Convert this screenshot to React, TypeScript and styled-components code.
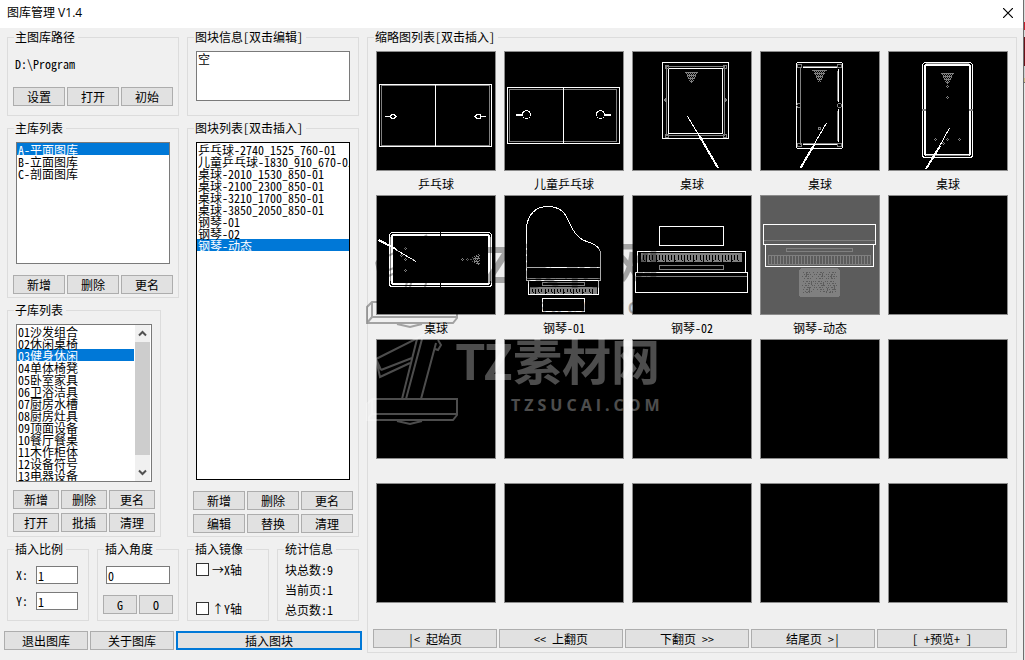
import React, { useState } from "react";
import styled, { createGlobalStyle, css } from "styled-components";

const GlobalStyle = createGlobalStyle`
  *, *::before, *::after { box-sizing: border-box; }
  body {
    margin: 0;
    background: #f0f0f0;
    color: #000;
    font: 12px/12px "Noto Sans Mono CJK SC", "Noto Sans CJK SC", monospace;
  }
  button, input, select, textarea { font: inherit; color: inherit; border-radius: 0; margin: 0; }
`;

/* ---------- window frame ---------- */

const Screen = styled.div`
  display: grid;
  grid-template-columns: minmax(0, 1fr) 2px;
  min-height: 100vh;
`;

const Backdrop = styled.div`
  border-left: 1px solid #6e6e6e;
  background: linear-gradient(
    #dcdcdc 22px, #c8202e 22px 30px, #d8d8d8 30px 37px, #6d1119 37px 66px,
    #d0d0d0 66px 78px, #d2bf8a 78px 82px, #707070 82px 83px, #e4e4e4 83px
  );
`;

const TitleBar = styled.header`
  display: flex;
  align-items: center;
  justify-content: space-between;
  height: 28px;
  padding: 0 8px 3px 7px;
  background: #fff;
`;

const Title = styled.h1`
  margin: 0;
  font: 12px/16px "Open Sans", "Noto Sans CJK SC", sans-serif;
`;

const CloseButton = styled.button`
  display: grid;
  place-items: center;
  width: 14px;
  height: 14px;
  padding: 0;
  border: 0;
  background: none;
`;

const Content = styled.main`
  display: flex;
  gap: 5px;
  padding: 3px 6px 7px 4px;
`;

const Sidebar = styled.div`
  flex: none;
  width: 358px;
`;

const Columns = styled.div`
  display: grid;
  grid-template-columns: 1fr 1fr;
  gap: 6px 8px;
  padding: 0 3px;
`;

const SpanRows = styled.div`
  display: grid;
  grid-row: span 2;
`;

const Options = styled.div`
  display: grid;
  grid-template-columns: repeat(4, 1fr);
  gap: 8px;
  padding: 6px 3px 10px;
`;

/* ---------- group box ---------- */

const Group = styled.fieldset<{ $narrow?: boolean; $bottom?: number }>`
  position: relative;
  min-width: 0;
  margin: 0 ${(p) => (p.$narrow ? "18px" : "0")} 0 0;
  padding: 0 5px ${(p) => p.$bottom ?? 3}px;
  border: 1px solid #dcdcdc;
`;

const Legend = styled.legend`
  margin-left: 1px;
  padding: 0 3px 1px 1px;
  line-height: 12px;
  white-space: nowrap;
`;

/* ---------- controls ---------- */

const Button = styled.button<{ $primary?: boolean }>`
  height: 19px;
  min-width: 0;
  padding: 0;
  border: 1px solid #adadad;
  background: #e1e1e1;
  line-height: 12px;
  white-space: pre;
  ${(p) => p.$primary && css`border: 2px solid #0078d7;`}
`;

const ButtonGrid = styled.div<{ $columns?: string }>`
  display: grid;
  grid-template-columns: ${(p) => p.$columns ?? "repeat(3, 1fr)"};
  gap: 4px 2px;
`;

const ListFrame = styled.div<{ $height: number; $dark?: boolean; $gap?: number }>`
  display: flex;
  height: ${(p) => p.$height}px;
  margin: 7px 3px ${(p) => p.$gap ?? 11}px;
  border: 1px solid ${(p) => (p.$dark ? "#000" : "#7a7a7a")};
  background: #fff;
`;

const List = styled.select`
  flex: 1;
  min-width: 0;
  padding: 0;
  border: 0;
  outline: 0;
  background: #fff;
  overflow: hidden;
  scrollbar-width: none;
`;

const ListOption = styled.option`
  display: flex;
  align-items: center;
  height: 12px;
  min-height: 12px;
  padding: 0 2px 0 1px;
  overflow: visible;
  &:checked {
    background: linear-gradient(#0078d7, #0078d7);
    -webkit-text-fill-color: #fff;
  }
`;

const ScrollBar = styled.div`
  display: flex;
  flex-direction: column;
  width: 15px;
  margin: 0 1px;
  background: #f0f0f0;
`;

const ScrollThumb = styled.div`
  flex: 1;
  margin-bottom: 9px;
  background: #cdcdcd;
`;

const ScrollButton = styled.button`
  display: grid;
  place-items: center;
  height: 17px;
  padding: 0;
  border: 0;
  background: none;
`;

const Path = styled.p`
  margin: 0 2px;
  padding: 14px 0 17px;
`;

const Info = styled.textarea`
  display: block;
  width: 154px;
  height: 50px;
  margin: 7px 3px 0;
  padding: 1px;
  border: 1px solid #7a7a7a;
  outline: 0;
  background: #fff;
  resize: none;
`;

const Fields = styled.div<{ $top: number; $gap: number }>`
  display: flex;
  flex-direction: column;
  gap: ${(p) => p.$gap}px;
  margin: ${(p) => p.$top}px 3px 0;
`;

const Field = styled.label`
  display: grid;
  grid-template-columns: 20px 42px;
  align-items: center;
`;

const TextBox = styled.input`
  width: 100%;
  min-width: 0;
  height: 18px;
  padding: 0 1px;
  border: 1px solid #7a7a7a;
  outline: 0;
  background: #fff;
`;

const AngleButtons = styled.div`
  display: grid;
  grid-template-columns: 1fr 1fr;
  gap: 2px;
  margin-top: 11px;
`;

const Check = styled.label`
  display: flex;
  align-items: center;
  gap: 3px;
  height: 13px;
  white-space: nowrap;
`;

const CheckBox = styled.input`
  appearance: none;
  width: 13px;
  height: 13px;
  border: 1px solid #333;
  background: #fff;
  &:checked { box-shadow: inset 0 0 0 2px #fff; background: #333; }
`;

const Stats = styled.p`
  margin: 4px 2px 0;
  line-height: 20px;
  white-space: nowrap;
`;

/* ---------- thumbnails ---------- */

const Gallery = styled(Group)`
  flex: 1;
`;

const ThumbGrid = styled.div`
  display: grid;
  grid-template-columns: repeat(5, 1fr);
  column-gap: 8px;
  margin: 7px 3px 2px;
`;

const Thumb = styled.figure`
  margin: 0;
`;

const ThumbButton = styled.button<{ $active?: boolean }>`
  display: block;
  width: 100%;
  aspect-ratio: 1;
  padding: 0;
  border: 1px solid #8c8c8c;
  background: ${(p) => (p.$active ? "#5c5c5c" : "#000")};
`;

const Drawing = styled.svg`
  display: block;
  width: 100%;
  height: 100%;
  fill: none;
  stroke: #fff;
  shape-rendering: crispEdges;
`;

const Caption = styled.figcaption`
  height: 24px;
  line-height: 25px;
  text-align: center;
`;

const Navigation = styled.nav`
  margin-right: 4px;
`;

const Watermark = styled.svg<{ $top: number; $light?: boolean }>`
  position: absolute;
  left: -4px;
  top: ${(p) => p.$top}px;
  width: 300px;
  height: 96px;
  overflow: visible;
  pointer-events: none;
  opacity: ${(p) => (p.$light ? 0.3 : 0.32)};
  color: ${(p) => (p.$light ? "#fff" : "#000")};
`;

const WatermarkName = styled.text`
  font: 700 49px "Noto Sans CJK SC", sans-serif;
  fill: currentColor;
`;

const WatermarkSite = styled.text`
  font: 700 16px "Open Sans", sans-serif;
  letter-spacing: 4px;
  fill: currentColor;
`;

/* ---------- drawings ---------- */

const GRAY = "#808080";

const Dots = ({ points }: { points: [number, number][] }) => (
  <path
    stroke={GRAY}
    d={points.map(([x, y]) => `M${x - 1} ${y}l1 -1l1 1l-1 1z`).join("")}
  />
);

const Rack = ({ x, y, width, height }: { x: number; y: number; width: number; height: number }) => {
  let d = "";
  for (let r = 0; r < height; r++) {
    const half = Math.max(0, Math.round((width / 2) * (1 - r / height)));
    for (let c = -half; c <= half; c++) {
      if ((c + r) % 2 === 0 || r % 3 === 0) d += `M${x + c} ${y + r + 0.5}h1`;
    }
  }
  return <path stroke={GRAY} d={d} />;
};

const Keys = ({ x, y, width, height, step }: { x: number; y: number; width: number; height: number; step: number }) => {
  let d = "";
  for (let i = step; i < width; i += step) d += `M${x + i} ${y}v${height}`;
  return (
    <g stroke={GRAY}>
      <rect x={x} y={y} width={width} height={height} />
      <path d={d} />
    </g>
  );
};

const BlackKeys = ({ x, y, width, height }: { x: number; y: number; width: number; height: number }) => {
  let d = "";
  for (let i = 2, n = 0; i < width - 1; i += n % 7 === 3 ? 4 : 3, n++) {
    d += `M${x + i} ${y + 1}v${n % 3 === 1 ? height - 1 : height - 3}`;
    if (n % 2 === 0) d += `M${x + i + 1} ${y + height - 2}v1`;
  }
  return (
    <g>
      <rect x={x} y={y} width={width} height={height} fill={GRAY} stroke={GRAY} />
      <path d={d} stroke="#000" />
    </g>
  );
};

const drawings: Record<string, React.ReactNode> = {
  pingpong: (
    <>
      <rect x="5.5" y="34.5" width="108" height="60" stroke={GRAY} />
      <rect x="3.5" y="33.5" width="112" height="62" />
      <path d="M59.5 33.5v62M9 65.5h5M105 65.5h5" />
      <path d="M14 65.5l2 -2h2l2 2l-2 2h-2zM99 65.5l2 -2h3v4h-3z" />
    </>
  ),
  kidsPingpong: (
    <>
      <rect x="5.5" y="38.5" width="107" height="52" stroke={GRAY} />
      <rect x="3.5" y="36.5" width="112" height="56" />
      <path d="M59.5 36.5v56" />
      <path d="M12 64h6M100 64h7" strokeWidth="2" />
      <circle cx="22.5" cy="63.5" r="4" />
      <circle cx="96.5" cy="63.5" r="4" />
    </>
  ),
  poolA: (
    <>
      <rect x="30.5" y="11.5" width="66" height="76" />
      <rect x="34.5" y="15.5" width="58" height="69" stroke={GRAY} />
      <rect x="36.5" y="17.5" width="54" height="65" />
      <path stroke={GRAY} d="M33 14h3v3h-3zM91 14h3v3h-3zM33 83h3v3h-3zM91 83h3v3h-3zM34.5 47l-2 2l2 2M92.5 47l2 2l-2 2" />
      <Rack x={59} y={21} width={11} height={11} />
      <path d="M55.5 65.5L68 86" />
      <path d="M67 84L86 117" strokeWidth="2" />
    </>
  ),
  poolB: (
    <>
      <rect x="36.5" y="11.5" width="46" height="86" rx="2" />
      <path d="M40.5 16v78M77.5 20v30M77.5 60v30" stroke={GRAY} />
      <path d="M43 16.5h34M43 93.5h34M78.5 18v33M78.5 58v33" />
      <path d="M43 15.5h34M43 92.5h34" stroke={GRAY} />
      <g stroke={GRAY}>
        <circle cx="39.5" cy="15" r="2" />
        <circle cx="79.5" cy="15" r="2" />
        <circle cx="39.5" cy="94" r="2" />
        <circle cx="79.5" cy="94" r="2" />
        <circle cx="39" cy="54.5" r="2" />
        <circle cx="79.5" cy="54.5" r="2" />
        <rect x="58.5" y="76.5" width="2" height="2" />
      </g>
      <Rack x={59} y={19} width={13} height={12} />
      <path d="M66.5 72L52 97" />
      <path d="M54 94L40.5 117" strokeWidth="2" />
    </>
  ),
  poolC: (
    <>
      <rect x="34.5" y="11.5" width="50" height="95" rx="3" />
      <rect x="37" y="14" width="45" height="90" rx="2" strokeWidth="2" />
      <path d="M38 12.5h43M38 104.5h43" stroke={GRAY} />
      <path d="M34 58.5h4M81 58.5h4" stroke={GRAY} strokeWidth="2" />
      <Rack x={59} y={22} width={11} height={12} />
      <Dots points={[[59.5, 35.5], [59.5, 46.5], [47.5, 88.5], [59.5, 88.5], [71.5, 88.5], [55.5, 92.5]]} />
      <path d="M61.5 77L50 98" />
      <path d="M52 95L38 118" strokeWidth="2" />
    </>
  ),
  poolD: (
    <>
      <rect x="13.5" y="37.5" width="102" height="54" rx="3" />
      <rect x="16" y="40" width="97" height="49" rx="2" strokeWidth="2" />
      <path d="M14.5 42v44M114.5 42v44" stroke={GRAY} />
      <path d="M64.5 37v4M64.5 88v4" stroke="#000" />
      <Dots points={[[29.5, 53.5], [25.5, 60.5], [29.5, 64.5], [29.5, 75.5], [86.5, 64.5], [91.5, 64.5]]} />
      <path
        stroke={GRAY}
        d="M94 64.5h2M96 62.5h1M96 66.5h1M97 64.5h1M98 61.5h1M98 63.5h1M98 65.5h1M98 67.5h1M99 62.5h1M99 64.5h1M99 66.5h1M100 60.5h1M100 63.5h1M100 65.5h1M100 68.5h1M101 61.5h1M101 64.5h1M101 67.5h1M102 59.5h1M102 62.5h1M102 66.5h1M102 69.5h1M103 60.5h1M103 63.5h1M103 65.5h1M103 68.5h1"
      />
      <path d="M97 63.5h6M98 66.5h5M100 61.500h3M100 68.500h3" stroke={GRAY} />
      <path d="M17 53L40 66.5" />
      <path d="M2.5 45L20 54" strokeWidth="2" />
    </>
  ),
  grandPiano: (
    <>
      <path d="M22.5 85.5V32C24 19 32 11.5 43.5 11.5C53 11.5 60 16 63.5 23.5C67 31 69 38 76 43C81 47 86 47 90 49.5C94 52 96.5 54 96.5 59V85.5Z" />
      <path d="M22.5 72.5h74" />
      <path d="M23 83.5h73" stroke={GRAY} />
      <path d="M24.5 85.5v14h70v-14" />
      <rect x="38.5" y="87.5" width="42" height="3" stroke={GRAY} />
      <BlackKeys x={26.5} y={92.5} width={66} height={6} />
      <rect x="38.5" y="103.5" width="42" height="13" />
    </>
  ),
  uprightPiano: (
    <>
      <rect x="27.5" y="31.5" width="64" height="19" />
      <rect x="5.5" y="56.5" width="108" height="21" />
      <BlackKeys x={9.5} y={58.5} width={100} height={8} />
      <rect x="27.5" y="70.5" width="64" height="4" stroke={GRAY} />
      <path d="M4 81.5h112" stroke={GRAY} />
      <rect x="3.5" y="77.5" width="112" height="20" />
    </>
  ),
  dynamicPiano: (
    <>
      <path d="M4 45.5h112" stroke={GRAY} />
      <rect x="3.5" y="29.5" width="112" height="20" />
      <rect x="5.5" y="49.5" width="108" height="22" />
      <rect x="26.5" y="53.5" width="66" height="3" stroke={GRAY} />
      <Keys x={8.5} y={60.5} width={102} height={9} step={3} />
      <rect x="39.5" y="73.5" width="40" height="28" rx="3" fill={GRAY} stroke={GRAY} />
      <path
        stroke="#5c5c5c"
        strokeDasharray="1 2 2 1 1 3 1 1"
        d="M43 77.5h11M57 77.5h9M69 77.5h8M44 79.5h34M42 81.5h12M58 81.5h19M44 83.5h9M56 83.5h22M43 86.5h33M45 88.5h32M42 90.5h13M58 90.5h20M44 92.5h33M43 94.5h12M57 94.5h19M45 96.5h10M60 96.5h16M43 97.5h9M66 97.5h10"
      />
      <path stroke="#5c5c5c" d="M46.5 77v4M51.5 86v4M62.5 78v3M63.5 87v4M71.5 80v4M74.5 91v4M49.5 92v4M67.5 93v3" />
    </>
  ),
};

const WatermarkArt = () => (
  <>
    <g fill="none" stroke="currentColor" strokeWidth="2">
      <path d="M8 66H93V82L89 87H3V71ZM8 66V81H93M3 87L8 81M33 88L46 91L58 88" />
      <path d="M38 66L53 6M42 66L58 6M57 66L72 10" />
      <path d="M12 26L52 6L63 -1M12 26L16 44L46 30M17 37L48 25M12 26L17 37" />
      <path d="M74 7L77 12L74 17L71 16" />
    </g>
    <WatermarkName x="91" y="47">TZ素材网</WatermarkName>
    <WatermarkSite x="147" y="78">TZSUCAI.COM</WatermarkSite>
  </>
);

/* ---------- data ---------- */

const mainLibraries = ["A-平面图库", "B-立面图库", "C-剖面图库"];

const subLibraries = [
  "01沙发组合", "02休闲桌椅", "03健身休闲", "04单体椅凳", "05卧室家具", "06卫浴洁具", "07厨房水槽",
  "08厨房灶具", "09顶面设备", "10餐厅餐桌", "11木作柜体", "12设备符号", "13电器设备",
];

const blocks = [
  "乒乓球-2740_1525_760-01", "儿童乒乓球-1830_910_670-01", "桌球-2010_1530_850-01",
  "桌球-2100_2300_850-01", "桌球-3210_1700_850-01", "桌球-3850_2050_850-01",
  "钢琴-01", "钢琴-02", "钢琴-动态",
];

const thumbs: { name: string; art?: string; active?: boolean }[] = [
  { name: "乒乓球", art: "pingpong" },
  { name: "儿童乒乓球", art: "kidsPingpong" },
  { name: "桌球", art: "poolA" },
  { name: "桌球", art: "poolB" },
  { name: "桌球", art: "poolC" },
  { name: "桌球", art: "poolD" },
  { name: "钢琴-01", art: "grandPiano" },
  { name: "钢琴-02", art: "uprightPiano" },
  { name: "钢琴-动态", art: "dynamicPiano", active: true },
  ...Array.from({ length: 11 }, () => ({ name: "" })),
];

interface ListBoxProps {
  label: string;
  items: string[];
  initial: string;
  height: number;
  gap?: number;
  dark?: boolean;
  scroll?: boolean;
}

const Chevron = ({ down }: { down?: boolean }) => (
  <svg width="9" height="7" viewBox="0 0 9 7" fill="none" stroke="#505050" strokeWidth="2">
    <path d={down ? "M1 1.5L4.5 5L8 1.5" : "M1 5.5L4.5 2L8 5.5"} />
  </svg>
);

function ListBox({ label, items, initial, height, gap, dark, scroll }: ListBoxProps) {
  const [value, setValue] = useState(initial);
  return (
    <ListFrame $height={height} $dark={dark} $gap={gap}>
      <List aria-label={label} size={items.length} value={value} onChange={(e) => setValue(e.target.value)}>
        {items.map((item) => (
          <ListOption key={item} value={item}>{item}</ListOption>
        ))}
      </List>
      {scroll && (
        <ScrollBar>
          <ScrollButton type="button" aria-label="向上滚动"><Chevron /></ScrollButton>
          <ScrollThumb />
          <ScrollButton type="button" aria-label="向下滚动"><Chevron down /></ScrollButton>
        </ScrollBar>
      )}
    </ListFrame>
  );
}

const Buttons = ({ labels, columns }: { labels: string[]; columns?: string }) => (
  <ButtonGrid $columns={columns}>
    {labels.map((label) => <Button key={label} type="button">{label}</Button>)}
  </ButtonGrid>
);

export default function App() {
  return (
    <Screen>
      <GlobalStyle />
      <div>
        <TitleBar>
          <Title>图库管理 V1.4</Title>
          <CloseButton type="button" aria-label="关闭">
            <svg width="10" height="10" viewBox="0 0 10 10" stroke="#000" strokeWidth="1.2" fill="none">
              <path d="M0 0L10 10M10 0L0 10" />
            </svg>
          </CloseButton>
        </TitleBar>
        <Content>
          <Sidebar>
            <Columns>
              <Group $bottom={9}>
                <Legend>主图库路径</Legend>
                <Path>D:\Program</Path>
                <Buttons labels={["设置", "打开", "初始"]} />
              </Group>
              <Group>
                <Legend>图块信息[双击编辑]</Legend>
                <Info aria-label="图块信息" defaultValue="空" />
              </Group>
              <Group>
                <Legend>主库列表</Legend>
                <ListBox label="主库列表" items={mainLibraries} initial="A-平面图库" height={122} />
                <Buttons labels={["新增", "删除", "更名"]} />
              </Group>
              <SpanRows>
                <Group>
                  <Legend>图块列表[双击插入]</Legend>
                  <ListBox label="图块列表" items={blocks} initial="钢琴-动态" height={338} dark />
                  <Buttons labels={["新增", "删除", "更名", "编辑", "替换", "清理"]} />
                </Group>
              </SpanRows>
              <Group $narrow $bottom={4}>
                <Legend>子库列表</Legend>
                <ListBox label="子库列表" items={subLibraries} initial="03健身休闲" height={158} gap={8} scroll />
                <Buttons labels={["新增", "删除", "更名", "打开", "批插", "清理"]} />
              </Group>
            </Columns>
            <Options>
              <Group $bottom={0}>
                <Legend>插入比例</Legend>
                <Fields $top={10} $gap={8}>
                  <Field>X:<TextBox defaultValue="1" /></Field>
                  <Field>Y:<TextBox defaultValue="1" /></Field>
                </Fields>
              </Group>
              <Group $bottom={0}>
                <Legend>插入角度</Legend>
                <Fields $top={10} $gap={0}>
                  <TextBox aria-label="插入角度" defaultValue="0" />
                </Fields>
                <AngleButtons>
                  <Button type="button">G</Button>
                  <Button type="button">O</Button>
                </AngleButtons>
              </Group>
              <Group $bottom={0}>
                <Legend>插入镜像</Legend>
                <Fields $top={7} $gap={26}>
                  <Check><CheckBox type="checkbox" />→X轴</Check>
                  <Check><CheckBox type="checkbox" />↑Y轴</Check>
                </Fields>
              </Group>
              <Group $bottom={0}>
                <Legend>统计信息</Legend>
                <Stats>块总数:9<br />当前页:1<br />总页数:1</Stats>
              </Group>
            </Options>
            <ButtonGrid $columns="84px 84px 1fr">
              <Button type="button">退出图库</Button>
              <Button type="button">关于图库</Button>
              <Button type="button" $primary>插入图块</Button>
            </ButtonGrid>
          </Sidebar>
          <Gallery $bottom={4}>
            <Legend>缩略图列表[双击插入]</Legend>
            <ThumbGrid>
              {thumbs.map(({ name, art, active }, i) => (
                <Thumb key={i}>
                  <ThumbButton type="button" $active={active} aria-label={name || "空"}>
                    {art && <Drawing viewBox="1 1 118 118">{drawings[art]}</Drawing>}
                  </ThumbButton>
                  <Caption>{name}</Caption>
                </Thumb>
              ))}
            </ThumbGrid>
            <Navigation>
              <Buttons
                labels={["|< 起始页", "<< 上翻页", "下翻页 >>", "结尾页 >|", "[ +预览+ ]"]}
                columns="124fr 124fr 124fr 124fr 130fr"
              />
            </Navigation>
            <Watermark $top={192} aria-hidden="true"><WatermarkArt /></Watermark>
            <Watermark $top={289} $light aria-hidden="true"><WatermarkArt /></Watermark>
          </Gallery>
        </Content>
      </div>
      <Backdrop />
    </Screen>
  );
}
